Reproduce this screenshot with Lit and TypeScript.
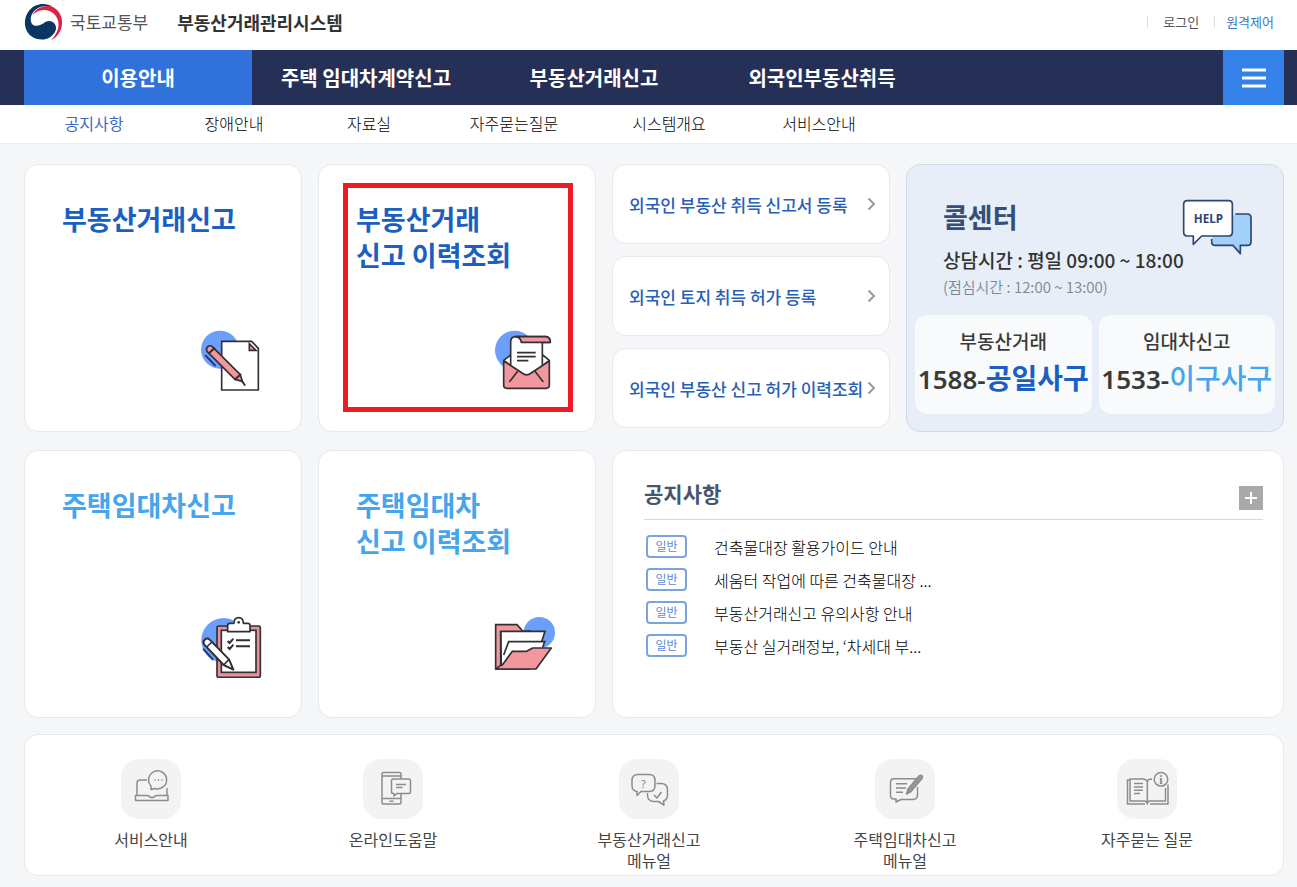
import { LitElement, html, svg, css } from "lit";
import { customElement } from "lit/decorators.js";

const MAIN_MENU = ["이용안내", "주택 임대차계약신고", "부동산거래신고", "외국인부동산취득"];
const SUB_MENU = ["공지사항", "장애안내", "자료실", "자주묻는질문", "시스템개요", "서비스안내"];
const FOREIGNER_LINKS = [
  "외국인 부동산 취득 신고서 등록",
  "외국인 토지 취득 허가 등록",
  "외국인 부동산 신고 허가 이력조회",
];
const NOTICES = [
  "건축물대장 활용가이드 안내",
  "세움터 작업에 따른 건축물대장 ...",
  "부동산거래신고 유의사항 안내",
  "부동산 실거래정보, ‘차세대 부...",
];

const emblem = html`<svg class="emblem" viewBox="70 9 117 114" aria-hidden="true">
  <path fill="#0b3661" d="M156 20C134 6 103 10 86 31C66 56 69 91 92 109C117 127 155 120 165 91C171 70 150 55 133 67C120 77 103 82 94 72C82 52 99 22 130 19C140 18 149 19 156 20Z"/>
  <path fill="#d92344" d="M96 44C104 26 128 14 150 19C172 26 186 46 184 72C182 94 170 112 151 120C167 104 176 86 173 65C168 38 132 14 96 44Z"/>
</svg>`;

const iconPaper = svg`
  <circle cx="120" cy="119" r="57" fill="#6c9ffa"/>
  <path d="M125 94H215L235 115V240H125Z" fill="#fff" stroke="#333034" stroke-width="5"/>
  <path d="M208 101V121H228Z" fill="#dfa0a9" stroke="#333034" stroke-width="5"/>
  <path d="M77 137L105 166" stroke="#27366b" stroke-width="6" stroke-linecap="round"/>
  <path d="M81 124A11 11 0 0 1 96 109L181 194L187 214L165 208Z" fill="#f2979d" stroke="#333034" stroke-width="5" stroke-linejoin="round"/>
  <path d="M87 130L103 115M165 208L181 194M186 213L194 225" stroke="#333034" stroke-width="6" stroke-linecap="round"/>`;

const iconMail = svg`
  <circle cx="104" cy="121" r="59" fill="#6c9ffa"/>
  <path d="M71 151L92 135H188L208 151L140 205Z" fill="#fff" stroke="#333034" stroke-width="5" stroke-linejoin="round"/>
  <path d="M92 174V96Q92 80 106 80H198Q211 82 211 97H187V174L140 198Z" fill="#fff" stroke="#333034" stroke-width="5" stroke-linejoin="round"/>
  <path d="M106 80H198Q211 82 211 97H124Q122 82 106 80Z" fill="#f2979d" stroke="#333034" stroke-width="5" stroke-linejoin="round"/>
  <path d="M71 153L131 192Q140 197 149 192L208 153V226Q208 235 199 235H80Q71 235 71 226Z" fill="#f2979d" stroke="#333034" stroke-width="5" stroke-linejoin="round"/>
  <path d="M113 184L88 216M165 184L190 216M111 128H167M111 140H167M111 152H145" fill="none" stroke="#333034" stroke-width="5"/>`;

const iconClipboard = svg`
  <circle cx="131" cy="121" r="67" fill="#6c9ffa"/>
  <rect x="111" y="78" width="130" height="154" rx="5" fill="#e7929a" stroke="#333034" stroke-width="5"/>
  <rect x="124" y="91" width="104" height="126" fill="#fff" stroke="#333034" stroke-width="5"/>
  <path d="M143 95V76Q143 70 150 70H162Q162 53 176 53Q190 53 190 70H203Q210 70 210 76V95Z" fill="#fff" stroke="#333034" stroke-width="5" stroke-linejoin="round"/>
  <circle cx="176" cy="67" r="4" fill="#333034"/>
  <path d="M143 123L149 129L160 116M143 141L149 147L160 134M168 121H210M168 139H210" fill="none" stroke="#333034" stroke-width="6"/>
  <path d="M71 148L98 178" stroke="#27366b" stroke-width="6" stroke-linecap="round"/>
  <path d="M73 134A11 11 0 0 1 89 119L147 178L160 209L131 195Z" fill="#fff" stroke="#333034" stroke-width="6" stroke-linejoin="round"/>
  <path d="M80 141L96 126M131 195L147 178" stroke="#333034" stroke-width="5"/>`;

const iconFolder = svg`
  <circle cx="178" cy="98" r="47" fill="#6c9ffa"/>
  <path d="M47 74H111L128 93H150V207H47Z" fill="#f2979d" stroke="#333034" stroke-width="5"/>
  <path d="M62 94H195L180 140L160 190L64 196Z" fill="#fff" stroke="#333034" stroke-width="5"/>
  <path d="M71 165L86 125H194L186 146L120 190L66 194Z" fill="#fff"/>
  <path d="M71 165L86 125H194L188 142" fill="none" stroke="#333034" stroke-width="5"/>
  <path d="M62 94V196H68" fill="none" stroke="#333034" stroke-width="5"/>
  <path d="M47 207L62 196L67 195L97 154H140L158 144H214L168 207Z" fill="#f2979d" stroke="#333034" stroke-width="5" stroke-linejoin="round"/>`;

const CARDS = [
  { lines: ["부동산거래신고"], tone: "deep", box: "60 60 186 186", icon: iconPaper, marked: false },
  { lines: ["부동산거래", "신고 이력조회"], tone: "deep", box: "42 60 186 186", icon: iconMail, marked: true },
  { lines: ["주택임대차신고"], tone: "sky", box: "60 48 186 186", icon: iconClipboard, marked: false },
  { lines: ["주택임대차", "신고 이력조회"], tone: "sky", box: "42 48 186 186", icon: iconFolder, marked: false },
];

const SERVICES = [
  {
    lines: ["서비스안내"],
    icon: svg`
      <path d="M16 36V24Q16 21 19 21H26M46 29V36"/>
      <path d="M14.500 36.500H26Q28 36.500 29 38Q31 39 33 38Q34 36.500 36 36.500H47V41.500H14.500Z"/>
      <path d="M30 27V30.500L34 29.500A9 9 0 1 0 30 27Z"/>
      <path d="M33.500 21H34.500M37 21H38M40.500 21H41.500" stroke-width="1.800"/>`,
  },
  {
    lines: ["온라인도움말"],
    icon: svg`
      <rect x="19" y="13.500" width="19" height="31.500" rx="1.500"/>
      <path d="M19 17H38M19 39.500H38M26.500 42.300H30.500"/>
      <path d="M30 20H46Q47.500 20 47.500 21.500V33Q47.500 34.500 46 34.500H34L31 37V34.500H30Q28.500 34.500 28.500 33V21.500Q28.500 20 30 20Z" fill="#f3f3f3"/>
      <path d="M33 25.500H43M33 28.500H39.500"/>`,
  },
  {
    lines: ["부동산거래신고", "메뉴얼"],
    icon: svg`
      <path d="M37.500 24.500H42Q48.500 24.500 48.500 31V36Q48.500 40.500 44.500 42L45 46L39.500 42.500H35Q28.500 42.500 28.500 36V34"/>
      <path d="M19 15.500H30Q36 15.500 36 21.500V26.500Q36 32.500 30 32.500H22L18 36.500V32.500Q13 32 13 26.500V21.500Q13 15.500 19 15.500Z"/>
      <path d="M35 36L38 39L42.500 33"/>
      <text x="24.500" y="28.500" text-anchor="middle" class="mark">?</text>`,
  },
  {
    lines: ["주택임대차신고", "메뉴얼"],
    icon: svg`
      <path d="M41 19.700H19Q15.500 19.700 15.500 23V36.500Q15.500 40 19 40H21V43L26 40.500H38Q42.500 40 42.500 36.500V28"/>
      <path d="M21 24.700H32M21 29H31M21 33.300H28"/>
      <path d="M31.500 35L33 30L44 17Q46 15.500 47.500 17.500L47 19.500L36 32.500Z" fill="#999"/>`,
  },
  {
    lines: ["자주묻는 질문"],
    icon: svg`
      <path d="M13 21H10.500V45H28M33 45H51V25.500"/>
      <path d="M30.300 22.500Q29 20 26 20H13V42H27Q30.300 42 30.300 45Q30.300 42 33 42H48.500V29M30.300 22.500V45M30.300 22.500Q31 20 35 20"/>
      <path d="M17 24.500H26M17 28H26M17 31.300H26M17 34.500H23"/>
      <circle cx="44" cy="20.300" r="6.800"/>
      <text x="44" y="24.500" text-anchor="middle" class="mark serif">i</text>`,
  },
];

@customElement("app-root")
export class AppRoot extends LitElement {
  static styles = css`
    :host {
      display: block;
      min-height: 100vh;
      background: #f5f6f8;
      color: #222;
      font-family: "Noto Sans CJK KR", "Noto Sans", sans-serif;
      font-size: 16px;
    }
    * { box-sizing: border-box; }
    a { color: inherit; text-decoration: none; }
    ul { list-style: none; margin: 0; padding: 0; }
    h1, h2, p { margin: 0; }
    button { border: 0; padding: 0; font: inherit; cursor: pointer; }

    .top, .nav, .sub, main { padding: 0 13px 0 24px; }
    .top {
      display: flex;
      align-items: center;
      height: 50px;
      padding-bottom: 6px;
      background: #fff;
      line-height: 24px;
    }
    .ministry { display: flex; align-items: center; gap: 7px; margin-right: 29px; font-size: 17px; color: #555; }
    .emblem { width: 39px; height: 38px; }
    .system { font-size: 18px; font-weight: 700; color: #333; }
    .tools { display: flex; align-items: center; margin-left: auto; padding-right: 10px; font-size: 13px; line-height: 20px; color: #555; }
    .tools li { display: flex; align-items: center; }
    .tools li::before { content: ""; height: 12px; margin: 0 15px; border-left: 1px solid #ddd; }
    .tools li:last-child::before { margin-right: 11px; }
    .remote { color: #3a78bd; }

    .nav { display: flex; justify-content: space-between; height: 55px; background: #262f55; }
    .menu { display: flex; }
    .menu a {
      display: flex;
      align-items: center;
      justify-content: center;
      width: 228px;
      height: 55px;
      font-size: 20px;
      font-weight: 700;
      color: #fff;
    }
    .menu .active { background: #3071dc; }
    .all { display: grid; place-items: center; width: 61px; background: #3482e9; }
    .all svg { width: 24px; height: 20px; }

    .sub { background: #fff; border-bottom: 1px solid #eceef0; }
    .sub ul { display: flex; }
    .sub a { display: block; height: 38px; line-height: 37px; text-align: center; font-weight: 300; color: #000; }
    .sub .active { color: #3b6ac0; font-weight: 400; }

    main { padding-top: 20px; padding-bottom: 11px; }
    .board {
      display: grid;
      grid-template-columns: 278fr 278fr 278fr 378fr;
      grid-auto-rows: minmax(268px, auto);
      gap: 18px 16px;
    }
    .panel { background: #fff; border: 1px solid #e6e8ec; border-radius: 14px; }
    .card {
      position: relative;
      display: flex;
      flex-direction: column;
      justify-content: space-between;
      padding: 36px 39px 39px 37px;
      font-size: 27px;
      line-height: 36px;
      font-weight: 500;
    }
    .card svg { width: 62px; height: 62px; align-self: flex-end; }
    .deep { color: #1b60c1; }
    .sky { color: #46a5ec; }
    .card.sky { font-weight: 700; }
    .frame { position: absolute; inset: 18px 22px 19px 24px; border: 5px solid #ed1c24; pointer-events: none; }
    .card.deep { font-weight: 700; }

    .quick { display: flex; flex-direction: column; gap: 12px; }
    .quick a {
      display: flex;
      align-items: center;
      justify-content: space-between;
      height: 80px;
      padding: 0 13px 0 16px;
      font-size: 17px;
      font-weight: 500;
      color: #2860b6;
      white-space: nowrap;
    }
    .quick svg { flex: none; width: 9px; height: 14px; }

    .call { display: flex; flex-direction: column; padding: 33px 8px 17px; background: #e8eef7; border-color: #cfdbec; }
    .callhead { display: flex; justify-content: space-between; padding: 0 23px 0 28px; height: 48px; }
    .callhead h2 { font-size: 27px; line-height: 38px; font-weight: 700; color: #345078; }
    .callhead svg { width: 70px; height: 58px; }
    .hours { padding-left: 28px; font-size: 19px; line-height: 28px; font-weight: 500; color: #333; white-space: nowrap; }
    .lunch { padding-left: 28px; font-size: 15px; line-height: 26px; font-weight: 350; color: #7d8794; }
    .phones { display: grid; grid-template-columns: 1fr 1fr; gap: 7px; margin-top: auto; }
    .phone {
      height: 99px;
      padding-top: 11px;
      border-radius: 12px;
      background: #f9fafb;
      text-align: center;
      font-size: 19px;
      line-height: 30px;
      font-weight: 500;
      color: #3a3a3a;
      white-space: nowrap;
    }
    .number { display: block; font-family: "Noto Sans", "Noto Sans CJK KR", sans-serif; font-size: 26px; line-height: 42px; font-weight: 600; }
    .number b { font-family: "Noto Sans CJK KR", sans-serif; font-size: 28px; font-weight: 500; }
    .number .deep { font-weight: 700; }

    .notice { grid-column: span 2; padding: 26px 20px 26px 31px; }
    .noticehead { display: flex; justify-content: space-between; align-items: center; height: 43px; border-bottom: 1px solid #d8d8d8; }
    .noticehead h2 { font-size: 21px; line-height: 34px; padding-bottom: 10px; font-weight: 700; color: #46566c; }
    .more { display: grid; place-items: center; width: 24px; height: 24px; background: #a9a9a9; }
    .more svg { width: 12px; height: 12px; }
    .notice ul { padding: 10px 0 0 2px; }
    .notice li a { display: flex; align-items: center; gap: 27px; height: 33px; line-height: 22px; font-weight: 300; color: #000; }
    .badge { width: 41px; height: 23px; border: 2px solid #7ba3e2; border-radius: 4px; text-align: center; font-size: 12px; line-height: 18px; font-weight: 400; color: #5e8dd6; }

    .services {
      display: grid;
      grid-template-columns: 242fr 242fr 270fr 242fr 242fr;
      min-height: 142px;
      margin-top: 16px;
      padding: 24px 15px 0 5px;
    }
    .services a { display: flex; flex-direction: column; align-items: center; line-height: 21px; text-align: center; color: #444; }
    .services svg { width: 60px; height: 60px; margin-bottom: 10px; border-radius: 18px; background: #f3f3f3; }
    .mark { font-family: "Noto Sans", sans-serif; font-size: 11px; fill: #888; stroke: none; }
    .serif { font-family: "Liberation Serif", serif; font-size: 12px; font-weight: 700; }
    .help { font-family: "Noto Sans", sans-serif; font-size: 35px; font-weight: 700; fill: #2b4673; }
  `;

  private text(lines: string[]) {
    return html`<span>${lines.map((line, i) => html`${i > 0 ? html`<br>` : ""}${line}`)}</span>`;
  }

  private card(index: number) {
    const c = CARDS[index];
    return html`<a class="panel card ${c.tone}" href="#">
      ${this.text(c.lines)}
      <svg viewBox=${c.box} fill="none" aria-hidden="true">${c.icon}</svg>
      ${c.marked ? html`<span class="frame"></span>` : ""}
    </a>`;
  }

  render() {
    return html`
      <header>
        <div class="top">
          <a class="ministry" href="#">${emblem}국토교통부</a>
          <h1 class="system">부동산거래관리시스템</h1>
          <ul class="tools">
            <li><a href="#">로그인</a></li>
            <li><a class="remote" href="#">원격제어</a></li>
          </ul>
        </div>
        <nav class="nav">
          <ul class="menu">
            ${MAIN_MENU.map((m, i) => html`<li><a class=${i === 0 ? "active" : ""} href="#">${m}</a></li>`)}
          </ul>
          <button class="all" type="button" aria-label="전체메뉴">
            <svg viewBox="0 0 24 20" aria-hidden="true"><path d="M0 2H24M0 10H24M0 18H24" stroke="#fff" stroke-width="3"/></svg>
          </button>
        </nav>
        <nav class="sub">
          <ul>
            ${SUB_MENU.map((m, i) => html`<li style="width:${100 + m.length * 10}px"><a class=${i === 0 ? "active" : ""} href="#">${m}</a></li>`)}
          </ul>
        </nav>
      </header>
      <main>
        <div class="board">
          ${this.card(0)} ${this.card(1)}
          <div class="quick">
            ${FOREIGNER_LINKS.map((t) => html`<a class="panel" href="#">${t}
              <svg viewBox="0 0 9 14" fill="none" aria-hidden="true"><path d="M1.500 1.500L7 7L1.500 12.500" stroke="#999" stroke-width="2"/></svg></a>`)}
          </div>
          <section class="panel call">
            <div class="callhead">
              <h2>콜센터</h2>
              <svg viewBox="848 129 210 174" fill="none" aria-hidden="true">
                <path d="M1008 177H1044Q1055 177 1055 188V260Q1055 271 1044 271H1023V296L1001 271H948Q937 271 937 260V250Z" fill="#a2d0fb"/>
                <path d="M1008 177H1044Q1055 177 1055 188V260Q1055 271 1044 271H1023V296L1001 271H948Q937 271 937 260V252" stroke="#2b4673" stroke-width="5" stroke-linejoin="round"/>
                <path d="M864 137H988Q999 137 999 148V232Q999 243 988 243H907L882 268V243H864Q853 243 853 232V148Q853 137 864 137Z" fill="#fff" stroke="#2b4673" stroke-width="5" stroke-linejoin="round"/>
                <text class="help" x="927" y="203" text-anchor="middle">HELP</text>
              </svg>
            </div>
            <p class="hours">상담시간 : 평일 09:00 ~ 18:00</p>
            <p class="lunch">(점심시간 : 12:00 ~ 13:00)</p>
            <div class="phones">
              <div class="phone">부동산거래<span class="number">1588-<b class="deep">공일사구</b></span></div>
              <div class="phone">임대차신고<span class="number">1533-<b class="sky">이구사구</b></span></div>
            </div>
          </section>
          ${this.card(2)} ${this.card(3)}
          <section class="panel notice">
            <div class="noticehead">
              <h2>공지사항</h2>
              <button class="more" type="button" aria-label="공지사항 더보기">
                <svg viewBox="0 0 12 12" aria-hidden="true"><path d="M6 0V12M0 6H12" stroke="#fff" stroke-width="2"/></svg>
              </button>
            </div>
            <ul>
              ${NOTICES.map((n) => html`<li><a href="#"><span class="badge">일반</span>${n}</a></li>`)}
            </ul>
          </section>
        </div>
        <nav class="panel services">
          ${SERVICES.map((s) => html`<a href="#">
            <svg viewBox="0 0 60 60" fill="none" stroke="#8c8c8c" stroke-width="1.500" stroke-linejoin="round" aria-hidden="true">${s.icon}</svg>
            ${this.text(s.lines)}
          </a>`)}
        </nav>
      </main>
    `;
  }
}
